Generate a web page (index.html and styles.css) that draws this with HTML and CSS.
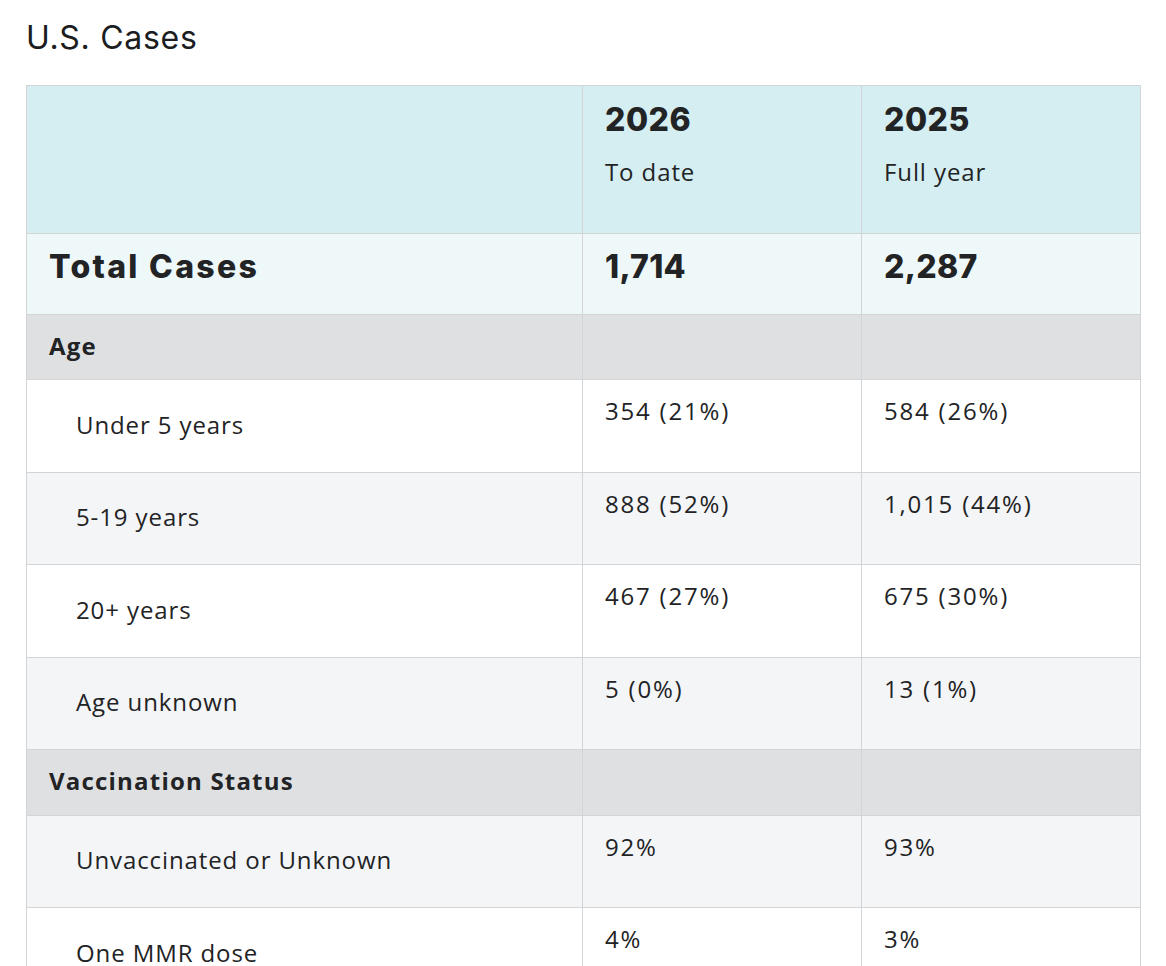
FILE: index.html
```html
<!DOCTYPE html>
<html lang="en">
<head>
<meta charset="utf-8">
<title>U.S. Cases</title>
<link rel="stylesheet" href="styles.css">
</head>
<body>
<main class="page">
  <h2 class="title">U.S. Cases</h2>
  <table class="cases">
    <colgroup>
      <col class="col-label">
      <col class="col-year">
      <col class="col-year">
    </colgroup>
    <thead>
      <tr class="head-row">
        <th></th>
        <th><span class="year">2026</span><span class="period">To date</span></th>
        <th><span class="year">2025</span><span class="period">Full year</span></th>
      </tr>
    </thead>
    <tbody>
      <tr class="total-row">
        <th class="total-label">Total Cases</th>
        <td class="total-num">1,714</td>
        <td class="total-num">2,287</td>
      </tr>
      <tr class="section-row">
        <th class="section-label">Age</th>
        <td></td>
        <td></td>
      </tr>
      <tr class="data-row">
        <th class="sub-label">Under 5 years</th>
        <td class="num">354 (21%)</td>
        <td class="num">584 (26%)</td>
      </tr>
      <tr class="data-row alt">
        <th class="sub-label">5-19 years</th>
        <td class="num">888 (52%)</td>
        <td class="num">1,015 (44%)</td>
      </tr>
      <tr class="data-row">
        <th class="sub-label">20+ years</th>
        <td class="num">467 (27%)</td>
        <td class="num">675 (30%)</td>
      </tr>
      <tr class="data-row alt">
        <th class="sub-label">Age unknown</th>
        <td class="num">5 (0%)</td>
        <td class="num">13 (1%)</td>
      </tr>
      <tr class="section-row tall">
        <th class="section-label">Vaccination Status</th>
        <td></td>
        <td></td>
      </tr>
      <tr class="data-row alt">
        <th class="sub-label">Unvaccinated or Unknown</th>
        <td class="num">92%</td>
        <td class="num">93%</td>
      </tr>
      <tr class="data-row">
        <th class="sub-label">One MMR dose</th>
        <td class="num">4%</td>
        <td class="num">3%</td>
      </tr>
    </tbody>
  </table>
</main>
</body>
</html>
```
FILE: styles.css
```css
html, body {
  margin: 0;
  padding: 0;
  background: #ffffff;
}

body {
  font-family: "Open Sans", "Noto Sans", sans-serif;
  color: #222325;
}

.page {
  padding: 16px 26px 0;
}

.title {
  font-family: "Inter", "Noto Sans", sans-serif;
  font-weight: 400;
  font-size: 32px;
  line-height: 44px;
  margin: 0 0 25px;
  color: #1c1d1f;
  letter-spacing: 0.7px;
}

.cases {
  width: 1114px;
  border-collapse: collapse;
  table-layout: fixed;
  font-size: 24px;
  letter-spacing: 0.9px;
}

.col-label { width: 556px; }
.col-year { width: 279px; }

.cases th,
.cases td {
  border: 1px solid #d3d4d6;
  text-align: left;
  padding: 0 22px;
  font-weight: 400;
}

.head-row {
  background: #d5eef2;
  height: 148px;
}

.head-row th {
  vertical-align: top;
  padding-top: 14px;
}

.year {
  display: block;
  font-family: "Inter", sans-serif;
  font-weight: 800;
  font-size: 32px;
  line-height: 40px;
  letter-spacing: 0.5px;
}

.period {
  display: block;
  margin-top: 16px;
  font-size: 24px;
  line-height: 32px;
}

.total-row {
  background: #eef8f9;
  height: 81px;
}

.total-row th,
.total-row td {
  vertical-align: top;
  padding-top: 13px;
  font-family: "Inter", sans-serif;
  font-weight: 800;
  font-size: 32px;
  line-height: 40px;
  letter-spacing: 0.3px;
}

.total-row .total-label {
  letter-spacing: 2.3px;
}

.section-row {
  background: #dfe0e2;
  height: 65px;
}

.section-row.tall {
  height: 66px;
}

.section-row th {
  font-weight: 700;
  vertical-align: middle;
  padding-bottom: 4px;
  letter-spacing: 1.2px;
}

.data-row {
  background: #ffffff;
  height: 93px;
}

.data-row.alt {
  background: #f4f5f7;
  height: 92px;
}

.cases .sub-label {
  padding-left: 49px;
  padding-bottom: 4px;
  vertical-align: middle;
}

.cases .num {
  vertical-align: top;
  padding-top: 14px;
  line-height: 34px;
  letter-spacing: 1.8px;
}
```
